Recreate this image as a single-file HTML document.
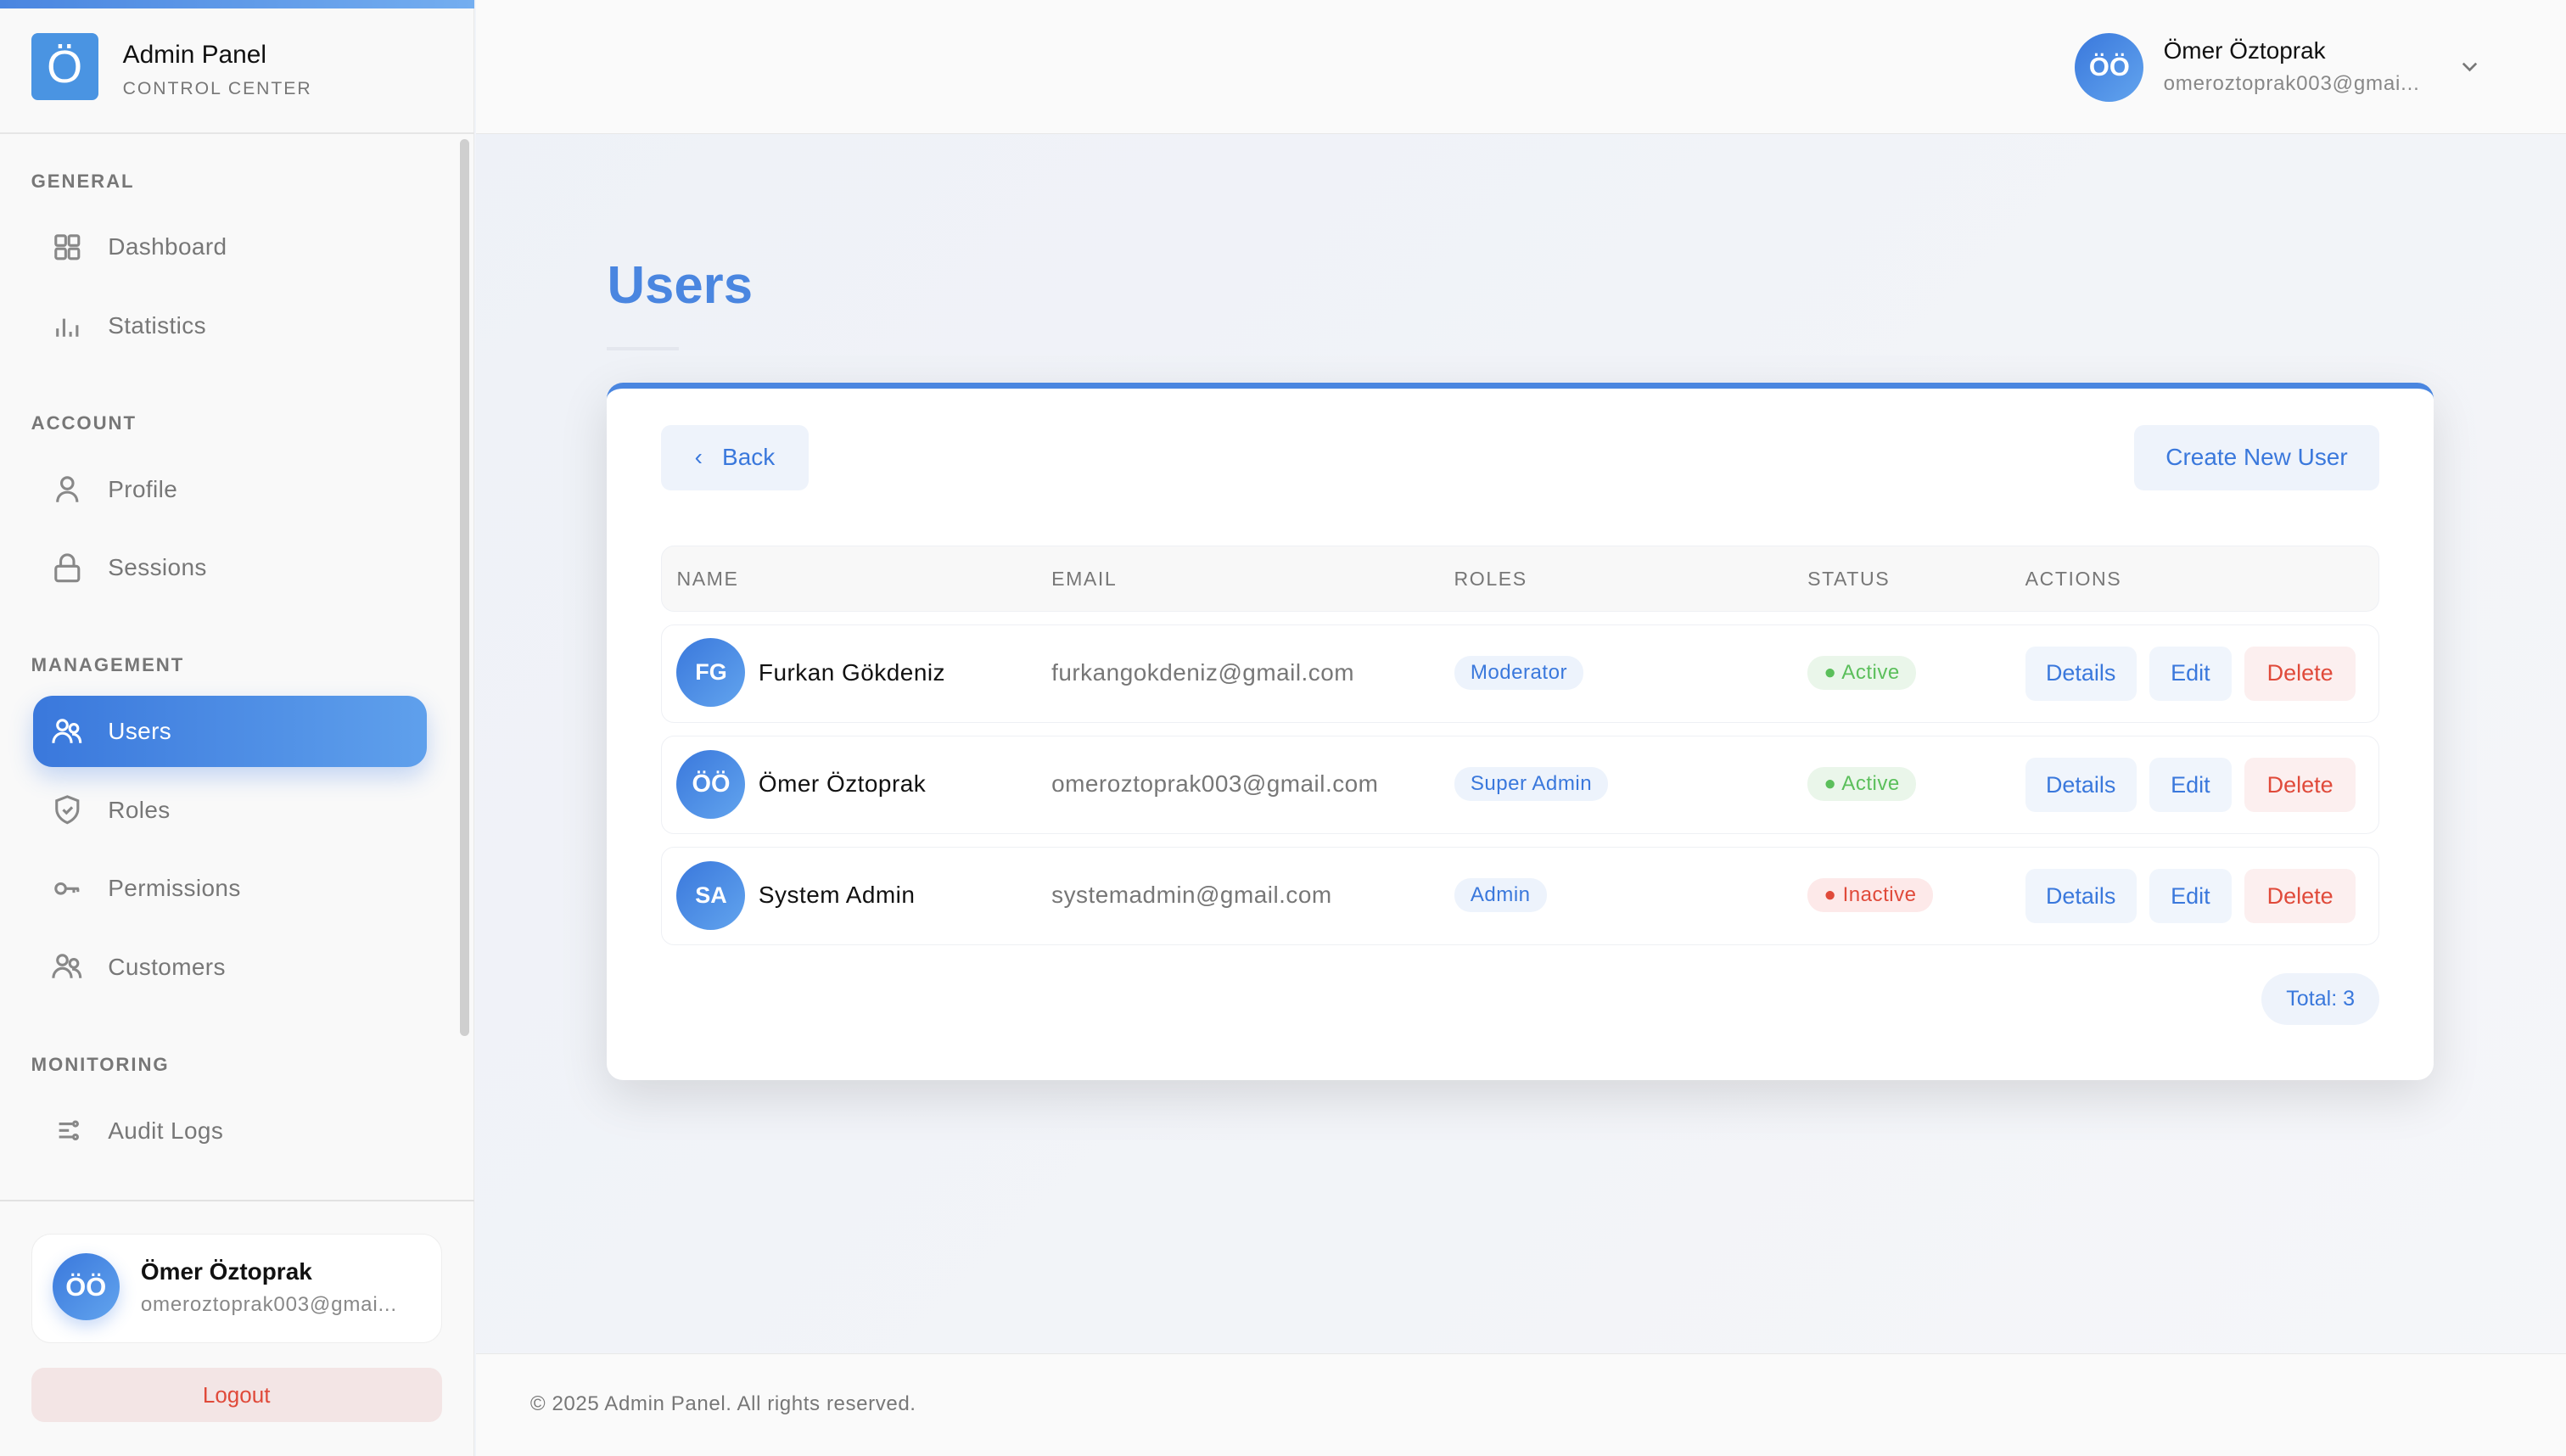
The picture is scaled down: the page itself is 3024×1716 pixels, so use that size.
<!DOCTYPE html>
<html><head><meta charset="utf-8"><style>
*{box-sizing:border-box;margin:0;padding:0}
html,body{width:3024px;height:1716px;overflow:hidden}
body{font-family:"Liberation Sans","Noto Sans CJK SC",sans-serif;background:#f1f3f8}
#root{zoom:1.928571;width:1568px;height:890px;position:relative;overflow:hidden}
.abs{position:absolute}
.side{left:0;top:0;width:290px;height:890px;background:#f9f9f9;border-right:1px solid #e8e8e8}
.topbar{left:0;top:0;width:290px;height:5px;background:linear-gradient(90deg,#4a86e0,#74aef0)}
.logo{left:19px;top:20px;width:41px;height:41px;background:#4a94e2;border-radius:4px;color:#fff;font-size:28px;text-align:center;line-height:42px}
.sec{left:19px;font-size:11.5px;letter-spacing:1px;color:#777;font-weight:bold}
.item{left:20px;width:241px;height:44px;display:flex;align-items:center;font-size:14.5px;color:#777;letter-spacing:.2px}
.item svg{margin-left:11px;margin-right:15px;width:20px;height:20px;fill:none;stroke:#888;stroke-width:1.6}
.item.act{background:linear-gradient(90deg,#3a78dc,#5fa0ec);border-radius:12px;color:#fff;box-shadow:0 6px 14px rgba(70,130,230,.3)}
.item.act svg{stroke:#fff}
.av{border-radius:50%;background:linear-gradient(135deg,#3a78dc,#62a4ee);color:#fff;display:flex;align-items:center;justify-content:center;font-weight:bold}
.main{left:291px;top:0;width:1277px;height:890px;background:linear-gradient(135deg,#eef1f7,#f5f6f9)}
.hdr{left:291px;top:0;width:1277px;height:82px;background:#fafafa;border-bottom:1px solid #e8e8e8}
.card{left:371px;top:234px;width:1116px;height:426px;background:#fff;border-radius:10px;box-shadow:0 10px 30px rgba(0,0,0,.12);border-top:4px solid #4a86e0;overflow:hidden}
.btn{position:absolute;border-radius:6px;display:flex;align-items:center;justify-content:center;font-size:14px}
.row{position:absolute;left:33px;width:1050px;height:60px;border:1px solid #eef0f4;border-radius:8px}
.cell{position:absolute;top:0;height:58px;display:flex;align-items:center;font-size:14.5px;letter-spacing:.25px}
.pill{border-radius:10px;padding:3px 10px;font-size:12.5px}
</style></head><body><div id="root">
<div class="abs main"></div>
<div class="abs hdr"></div>
<div class="abs side"></div>
<div class="abs topbar"></div>
<div class="abs" style="left:0;top:81px;width:290px;height:1px;background:#e6e6e6"></div>
<div class="abs logo">Ö</div>
<div class="abs" style="left:75px;top:25px;font-size:15.5px;color:#111">Admin Panel</div>
<div class="abs" style="left:75px;top:48px;font-size:11px;color:#777;letter-spacing:1px">CONTROL CENTER</div>
<div class="abs" style="left:281px;top:85px;width:6px;height:548px;background:#cfcfcf;border-radius:3px"></div>
<div class="abs sec" style="top:104px">GENERAL</div>
<div class="abs item" style="top:129px"><svg viewBox="0 0 20 20"><rect x="3" y="3" width="6" height="6" rx="1"/><rect x="11" y="3" width="6" height="6" rx="1"/><rect x="3" y="11" width="6" height="6" rx="1"/><rect x="11" y="11" width="6" height="6" rx="1"/></svg>Dashboard</div>
<div class="abs item" style="top:177px"><svg viewBox="0 0 20 20"><path d="M4 17v-5M8 17V6M12 17v-3M16 17v-7"/></svg>Statistics</div>
<div class="abs sec" style="top:252px">ACCOUNT</div>
<div class="abs item" style="top:277px"><svg viewBox="0 0 20 20"><circle cx="10" cy="6.5" r="3.5"/><path d="M4 18c0-4 3-6 6-6s6 2 6 6"/></svg>Profile</div>
<div class="abs item" style="top:325px"><svg viewBox="0 0 20 20"><rect x="3" y="9" width="14" height="9" rx="1.5"/><path d="M6 9V6a4 4 0 0 1 8 0v3"/></svg>Sessions</div>
<div class="abs sec" style="top:400px">MANAGEMENT</div>
<div class="abs item act" style="top:425px"><svg viewBox="0 0 20 20"><circle cx="7" cy="6" r="3"/><circle cx="14" cy="8" r="2.5"/><path d="M1.5 17c0-4 3-6 5.5-6s5.5 2 5.5 6M13 11.5c2.5 0 5 1.5 5 5.5"/></svg>Users</div>
<div class="abs item" style="top:473px"><svg viewBox="0 0 20 20"><path d="M10 2l6.5 2.5v5c0 4-3 7-6.5 8.5C6.5 16.5 3.5 13.5 3.5 9.5v-5z"/><path d="M7.5 10l2 2 3.5-3.5"/></svg>Roles</div>
<div class="abs item" style="top:521px"><svg viewBox="0 0 20 20"><circle cx="6" cy="10" r="3"/><path d="M9 10h8M14 10v2.5M16.5 10v2"/></svg>Permissions</div>
<div class="abs item" style="top:569px"><svg viewBox="0 0 20 20"><circle cx="7" cy="6" r="3"/><circle cx="14" cy="8" r="2.5"/><path d="M1.5 17c0-4 3-6 5.5-6s5.5 2 5.5 6M13 11.5c2.5 0 5 1.5 5 5.5"/></svg>Customers</div>
<div class="abs sec" style="top:644px">MONITORING</div>
<div class="abs item" style="top:669px"><svg viewBox="0 0 20 20"><path d="M5 6h8M5 10h6M5 14h8"/><circle cx="15" cy="6" r="1.3"/><circle cx="15" cy="14" r="1.3"/></svg>Audit Logs</div>
<div class="abs" style="left:0;top:733px;width:290px;height:1px;background:#e2e2e2"></div>
<div class="abs" style="left:19px;top:754px;width:251px;height:67px;background:#fff;border:1px solid #eee;border-radius:12px"></div>
<div class="abs av" style="left:32px;top:766px;width:41px;height:41px;font-size:16px;box-shadow:0 4px 10px rgba(70,130,230,.3)">ÖÖ</div>
<div class="abs" style="left:86px;top:769px;font-size:14.5px;color:#111;font-weight:bold">Ömer Öztoprak</div>
<div class="abs" style="left:86px;top:790px;font-size:12.5px;color:#888;letter-spacing:.4px">omeroztoprak003@gmai...</div>
<div class="abs" style="left:19px;top:836px;width:251px;height:33px;background:#f3e5e5;border-radius:8px;color:#e04a3a;font-size:13.5px;display:flex;align-items:center;justify-content:center">Logout</div>
<div class="abs av" style="left:1268px;top:20px;width:42px;height:42px;font-size:16px">ÖÖ</div>
<div class="abs" style="left:1322px;top:23px;font-size:14.5px;color:#111">Ömer Öztoprak</div>
<div class="abs" style="left:1322px;top:44px;font-size:12.5px;color:#888;letter-spacing:.4px">omeroztoprak003@gmai...</div>
<svg class="abs" style="left:1502px;top:35px" width="14" height="12" viewBox="0 0 14 12"><path d="M3 4l4 4 4-4" fill="none" stroke="#777" stroke-width="1.4"/></svg>
<div class="abs" style="left:371px;top:156px;font-size:32px;color:#4a86e0;font-weight:bold">Users</div>
<div class="abs" style="left:371px;top:212px;width:44px;height:2px;background:#e4e7ee"></div>
<div class="abs card">
 <div class="btn" style="left:33px;top:22px;width:90px;height:40px;background:#eef3fb;color:#3a78dc;font-size:14.5px"><span style="margin-right:12px">‹</span>Back</div>
 <div class="btn" style="left:933px;top:22px;width:150px;height:40px;background:#eef3fb;color:#3a78dc;font-size:14.5px">Create New User</div>
 <div style="position:absolute;left:33px;top:96px;width:1050px;height:40px;background:#f8f8f8;border:1px solid #eef0f4;border-radius:8px;font-size:12px;color:#777;letter-spacing:.8px">
  <span style="position:absolute;left:9px;top:13px">NAME</span><span style="position:absolute;left:238px;top:13px">EMAIL</span><span style="position:absolute;left:484px;top:13px">ROLES</span><span style="position:absolute;left:700px;top:13px">STATUS</span><span style="position:absolute;left:833px;top:13px">ACTIONS</span>
 </div>
 <div class="row" style="top:144px">
  <div class="abs av" style="left:9px;top:8px;width:42px;height:42px;font-size:14px">FG</div>
  <div class="cell" style="left:59px;color:#111">Furkan Gökdeniz</div>
  <div class="cell" style="left:238px;color:#777">furkangokdeniz@gmail.com</div>
  <div class="cell" style="left:484px"><span class="pill" style="background:#edf3fc;color:#3a78dc">Moderator</span></div>
  <div class="cell" style="left:700px"><span class="pill" style="background:#eaf6ea;color:#5bbf5b">● Active</span></div>
  <div class="btn" style="left:833px;top:13px;width:68px;height:33px;background:#f0f5fc;color:#3a78dc">Details</div>
  <div class="btn" style="left:909px;top:13px;width:50px;height:33px;background:#f0f5fc;color:#3a78dc">Edit</div>
  <div class="btn" style="left:967px;top:13px;width:68px;height:33px;background:#fcefef;color:#e04a3a">Delete</div>
 </div>
 <div class="row" style="top:212px">
  <div class="abs av" style="left:9px;top:8px;width:42px;height:42px;font-size:15px">ÖÖ</div>
  <div class="cell" style="left:59px;color:#111">Ömer Öztoprak</div>
  <div class="cell" style="left:238px;color:#777">omeroztoprak003@gmail.com</div>
  <div class="cell" style="left:484px"><span class="pill" style="background:#edf3fc;color:#3a78dc">Super Admin</span></div>
  <div class="cell" style="left:700px"><span class="pill" style="background:#eaf6ea;color:#5bbf5b">● Active</span></div>
  <div class="btn" style="left:833px;top:13px;width:68px;height:33px;background:#f0f5fc;color:#3a78dc">Details</div>
  <div class="btn" style="left:909px;top:13px;width:50px;height:33px;background:#f0f5fc;color:#3a78dc">Edit</div>
  <div class="btn" style="left:967px;top:13px;width:68px;height:33px;background:#fcefef;color:#e04a3a">Delete</div>
 </div>
 <div class="row" style="top:280px">
  <div class="abs av" style="left:9px;top:8px;width:42px;height:42px;font-size:14px">SA</div>
  <div class="cell" style="left:59px;color:#111">System Admin</div>
  <div class="cell" style="left:238px;color:#777">systemadmin@gmail.com</div>
  <div class="cell" style="left:484px"><span class="pill" style="background:#edf3fc;color:#3a78dc">Admin</span></div>
  <div class="cell" style="left:700px"><span class="pill" style="background:#fde9e9;color:#e04a3a">● Inactive</span></div>
  <div class="btn" style="left:833px;top:13px;width:68px;height:33px;background:#f0f5fc;color:#3a78dc">Details</div>
  <div class="btn" style="left:909px;top:13px;width:50px;height:33px;background:#f0f5fc;color:#3a78dc">Edit</div>
  <div class="btn" style="left:967px;top:13px;width:68px;height:33px;background:#fcefef;color:#e04a3a">Delete</div>
 </div>
 <div class="btn" style="left:1011px;top:357px;width:72px;height:32px;background:#eef3fb;color:#3a78dc;border-radius:16px;font-size:13px">Total: 3</div>
</div>
<div class="abs" style="left:291px;top:827px;width:1277px;height:63px;background:#fafafa;border-top:1px solid #e8e8e8"></div>
<div class="abs" style="left:324px;top:851px;font-size:12.5px;color:#777;letter-spacing:.3px">© 2025 Admin Panel. All rights reserved.</div>
</div></body></html>
